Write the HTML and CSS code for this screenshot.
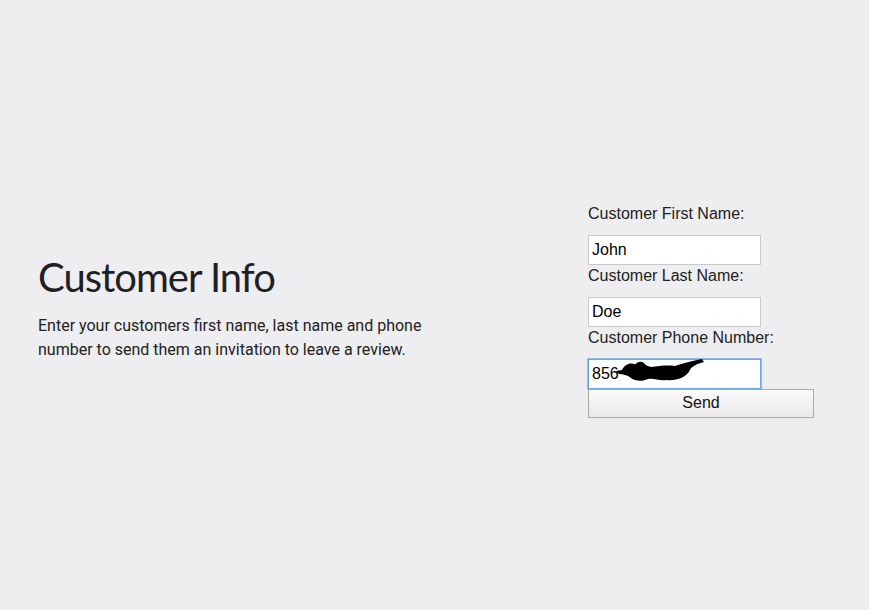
FILE: index.html
```html
<!DOCTYPE html>
<html>
<head>
<meta charset="utf-8">
<link rel="stylesheet" href="styles.css">
</head>
<body>
<main class="page">
  <section class="intro">
    <h1 class="title">Customer Info</h1>
    <p class="lead">Enter your customers first name, last name and phone<br>number to send them an invitation to leave a review.</p>
  </section>
  <form class="form">
    <label class="label">Customer First Name:</label>
    <div class="input">John</div>
    <label class="label">Customer Last Name:</label>
    <div class="input">Doe</div>
    <label class="label">Customer Phone Number:</label>
    <div class="input focus">856<svg class="scribble" width="90" height="26" viewBox="0 0 90 26"><path d="M0 13 L6 12 C9 6 15 4 20 7 C26 4 31 8 35 9 C43 8 51 7 59 8 C67 5 76 3 86 1 L88 4 C81 6 76 8 74 12 C70 20 60 23 50 22 C43 23 38 20 32 21 C26 24 19 23 15 20 C11 17 7 16 3 16 Z" fill="#000"/><path d="M18 8 C22 2 28 3 30 8 C28 14 20 14 18 8 Z" fill="#000"/></svg></div>
    <button type="button" class="send">Send</button>
  </form>
</main>
</body>
</html>
```
FILE: styles.css
```css
html, body {
  margin: 0;
  padding: 0;
  background: #eeeef0;
}
.page {
  height: 610px;
  display: flex;
  align-items: center;
  font-family: "Liberation Sans", Arial, sans-serif;
  color: #222;
}
.intro {
  width: 588px;
  padding-left: 38px;
  box-sizing: border-box;
  padding-top: 4px;
}
.title {
  margin: 0 0 13px 0;
  font-family: Lato, sans-serif;
  font-weight: 400;
  font-size: 40px;
  letter-spacing: -1px;
  line-height: 48px;
  color: #1e2025;
}
.lead {
  margin: 0;
  font-family: Roboto, sans-serif;
  font-size: 16px;
  line-height: 24px;
  color: #222;
}
.form {
  display: flex;
  flex-direction: column;
  align-items: flex-start;
  padding-top: 10px;
}
.label {
  font-size: 16px;
  line-height: 18px;
  margin-bottom: 12px;
  margin-top: 2px;
  color: #222;
}
.input {
  width: 173px;
  height: 30px;
  box-sizing: border-box;
  border: 1px solid #c9c9c9;
  background: #fff;
  font-size: 16px;
  line-height: 28px;
  padding-left: 3px;
  color: #000;
  display: flex;
  align-items: center;
}
.focus {
  border: 1px solid #6ea6e8;
  box-shadow: 0 0 0 1px #8fbaf0;
}
.scribble {
  margin-left: -3px;
  margin-top: -5px;
}
.send {
  margin-top: 0;
  width: 226px;
  height: 29px;
  border: 1px solid #a9a9a9;
  border-radius: 0;
  background: linear-gradient(#fbfbfb, #e9e9e9);
  font-family: "Liberation Sans", Arial, sans-serif;
  font-size: 16px;
  color: #111;
  padding: 0;
}
```
